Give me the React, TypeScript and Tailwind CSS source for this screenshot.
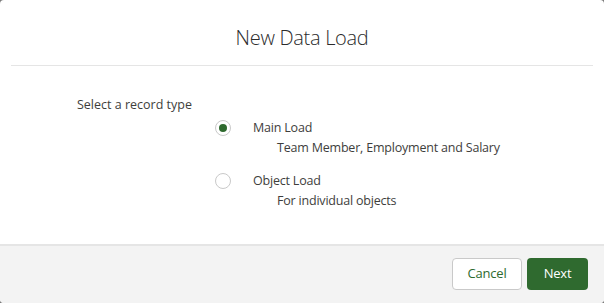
import React from "react";

export default function App() {
  const font = { fontFamily: '"Segoe UI", "Open Sans", "Noto Sans", sans-serif' };
  return (
    <div className="w-[604px] h-[303px] bg-[#7a7a7a]" style={font}>
      <div className="w-full h-full bg-white rounded-[4px] overflow-hidden flex flex-col">
        <div className="mx-[11px] h-[66px] border-b border-[#e5e5e5] pt-[24px] text-center">
          <h2 className="text-[20px] leading-[28px] font-light text-[#2b2b2b] tracking-[-0.3px]">New Data Load</h2>
        </div>
        <div className="flex-1 pt-[29px] pl-[77px] text-[12.5px] tracking-[-0.2px] leading-[20px] text-[#3e3e3c]">
          <div className="tracking-[0px]">Select a record type</div>
          <div className="mt-[3px] ml-[138px] flex flex-col gap-[13px]">
            <label className="flex flex-col">
              <span className="flex items-center">
                <span className="-mt-[1px] w-[16px] h-[16px] rounded-full border border-[#c9c9c9] bg-white flex items-center justify-center">
                  <span className="w-[8px] h-[8px] rounded-full bg-[#2e6a2e]" />
                </span>
                <span className="ml-[22px]">Main Load</span>
              </span>
              <span className="ml-[62px]">Team Member, Employment and Salary</span>
            </label>
            <label className="flex flex-col">
              <span className="flex items-center">
                <span className="-mt-[1px] w-[16px] h-[16px] rounded-full border border-[#c9c9c9] bg-white" />
                <span className="ml-[22px]">Object Load</span>
              </span>
              <span className="ml-[62px]">For individual objects</span>
            </label>
          </div>
        </div>
        <div className="h-[59px] border-t-2 border-[#e5e5e5] bg-[#f3f3f3] flex items-center justify-end gap-[5px] pr-[16px] pb-[1px]">
          <button className="h-[32px] w-[70px] rounded-[4px] border border-[#c9c9c9] bg-white text-[13px] tracking-[-0.2px] text-[#2e6a2e]">Cancel</button>
          <button className="h-[32px] w-[61px] rounded-[4px] bg-[#2f6a2f] text-[13px] tracking-[-0.2px] text-white">Next</button>
        </div>
      </div>
    </div>
  );
}
